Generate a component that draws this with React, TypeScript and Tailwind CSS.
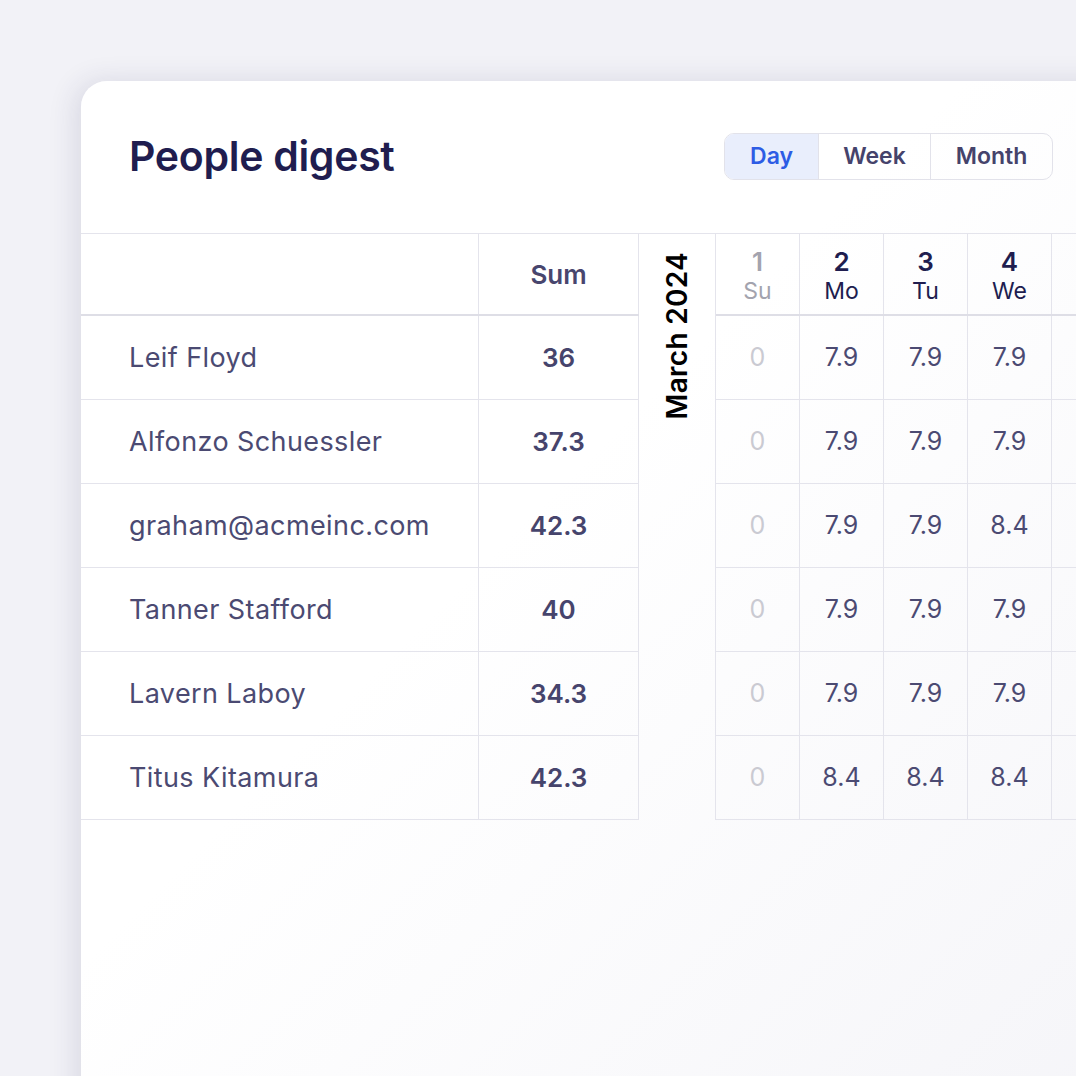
import React from 'react';

type Row = { name: string; sum: string; days: string[] };

const rows: Row[] = [
  { name: 'Leif Floyd', sum: '36', days: ['0', '7.9', '7.9', '7.9'] },
  { name: 'Alfonzo Schuessler', sum: '37.3', days: ['0', '7.9', '7.9', '7.9'] },
  { name: 'graham@acmeinc.com', sum: '42.3', days: ['0', '7.9', '7.9', '8.4'] },
  { name: 'Tanner Stafford', sum: '40', days: ['0', '7.9', '7.9', '7.9'] },
  { name: 'Lavern Laboy', sum: '34.3', days: ['0', '7.9', '7.9', '7.9'] },
  { name: 'Titus Kitamura', sum: '42.3', days: ['0', '8.4', '8.4', '8.4'] },
];

const dayHeads = [
  { num: '1', label: 'Su', weekend: true },
  { num: '2', label: 'Mo', weekend: false },
  { num: '3', label: 'Tu', weekend: false },
  { num: '4', label: 'We', weekend: false },
  { num: '', label: '', weekend: false },
];

export default function App() {
  return (
    <div
      className="w-[1076px] h-[1076px] overflow-hidden bg-[#f2f2f7] pt-[81px] pl-[81px]"
      style={{ fontFamily: 'Inter, "Noto Sans", sans-serif' }}
    >
      <div className="w-[1100px] h-[1100px] rounded-tl-[26px] bg-gradient-to-br from-white from-40% to-[#f4f4f8] shadow-[-6px_0_28px_rgba(40,40,90,0.12)]">
        {/* Header */}
        <div className="w-[995px] h-[152px] flex items-center pl-12 pr-[23px]">
          <h1 className="text-[41px] font-semibold text-[#201d4f] tracking-[-0.3px]">
            People digest
          </h1>
          <div className="ml-auto -mt-[2px] flex h-[47px] rounded-[10px] border border-[#e2e2ea] overflow-hidden text-[23px] font-semibold">
            <div className="w-[93px] flex items-center justify-center bg-[#e9eefc] text-[#2d5ce5]">
              Day
            </div>
            <div className="w-[112px] flex items-center justify-center border-l border-[#e2e2ea] text-[#45436b]">
              Week
            </div>
            <div className="w-[122px] flex items-center justify-center border-l border-[#e2e2ea] text-[#45436b]">
              Month
            </div>
          </div>
        </div>

        {/* Table */}
        <div className="flex border-t border-[#e4e4ec]">
          {/* Names + Sum */}
          <div className="w-[558px]">
            <div className="flex h-[82px] border-b-2 border-[#dedee6]">
              <div className="w-[398px] border-r border-[#e4e4ec]" />
              <div className="w-[160px] border-r border-[#e4e4ec] flex items-center justify-center text-[26px] font-semibold text-[#48466e]">
                Sum
              </div>
            </div>
            {rows.map((r) => (
              <div key={r.name} className="flex h-[84px] border-b border-[#e4e4ec]">
                <div className="w-[398px] border-r border-[#e4e4ec] flex items-center pl-12 pt-[2px] text-[27px] tracking-[0.4px] text-[#4b4a72]">
                  {r.name}
                </div>
                <div className="w-[160px] border-r border-[#e4e4ec] flex items-center justify-center text-[26px] font-semibold text-[#46446c]">
                  {r.sum}
                </div>
              </div>
            ))}
          </div>

          {/* Month label */}
          <div className="w-[76px] flex justify-center pt-[18px]">
            <span className="[writing-mode:vertical-rl] rotate-180 text-[28px] font-semibold text-black tracking-[0.3px] h-fit">
              March 2024
            </span>
          </div>

          {/* Days */}
          <div className="flex-1 border-l border-[#e4e4ec]">
            <div className="flex h-[82px] border-b-2 border-[#dedee6]">
              {dayHeads.map((d, i) => (
                <div
                  key={i}
                  className="w-[84px] shrink-0 border-r border-[#e4e4ec] flex flex-col items-center justify-center leading-none pt-1"
                >
                  <span
                    className={`text-[26px] font-semibold ${d.weekend ? 'text-[#a3a3ae]' : 'text-[#201d4f]'}`}
                  >
                    {d.num}
                  </span>
                  <span
                    className={`text-[23px] mt-[5px] ${d.weekend ? 'text-[#a3a3ae]' : 'text-[#201d4f]'}`}
                  >
                    {d.label}
                  </span>
                </div>
              ))}
            </div>
            {rows.map((r) => (
              <div key={r.name} className="flex h-[84px] border-b border-[#e4e4ec]">
                {[...r.days, ''].map((v, i) => (
                  <div
                    key={i}
                    className={`w-[84px] shrink-0 border-r border-[#e4e4ec] flex items-center justify-center text-[25px] ${
                      v === '0' ? 'text-[#cacad2]' : 'text-[#4b4a72]'
                    }`}
                  >
                    {v}
                  </div>
                ))}
              </div>
            ))}
          </div>
        </div>
      </div>
    </div>
  );
}
